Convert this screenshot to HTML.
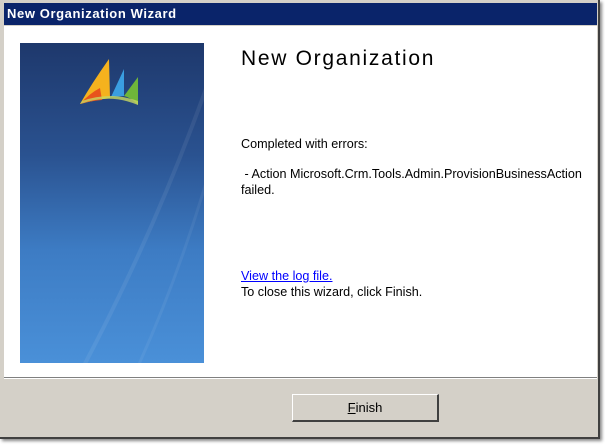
<!DOCTYPE html>
<html><head><style>
body{margin:0;width:605px;height:445px;background:#fff;position:relative;overflow:hidden;font-family:"Liberation Sans",sans-serif;}
.win{position:absolute;left:0;top:0;width:598px;height:437px;background:#d4d0c8;border-right:2px solid #404040;border-bottom:2px solid #404040;box-shadow:2px 2px 3px #888;}
.title{position:absolute;left:4px;top:3px;width:593px;height:22px;background:#0a246a;color:#fff;font-weight:bold;font-size:13px;letter-spacing:0.6px;line-height:22px;padding-left:3px;box-sizing:border-box;}
.content{position:absolute;left:4px;top:26px;width:593px;height:351px;background:#fff;border-bottom:1px solid #808080;}
.sep{position:absolute;left:4px;top:378px;width:593px;height:1px;background:#fff;}
.panel{position:absolute;left:20px;top:43px;width:184px;height:320px;background:linear-gradient(180deg,#1e386c 0%,#2a5290 35%,#3d7cc4 65%,#4a90d8 100%);overflow:hidden;}
.t{position:absolute;font-size:12.6px;color:#000;}
.btn{position:absolute;left:292px;top:394px;width:147px;height:28px;background:#d4d0c8;border-top:1px solid #fff;border-left:1px solid #fff;border-right:2px solid #404040;border-bottom:2px solid #404040;box-sizing:border-box;font-size:13px;text-align:center;line-height:25px;}
</style></head><body>
<div class="win">
<div class="title">New Organization Wizard</div>
<div class="content"></div>
<div class="sep"></div>
<div class="panel">
<svg width="184" height="320" style="position:absolute;left:0;top:0">
<path d="M195,20 Q140,180 60,330" stroke="rgba(255,255,255,0.07)" stroke-width="4" fill="none"/>
<path d="M205,70 Q170,210 115,330" stroke="rgba(255,255,255,0.06)" stroke-width="3" fill="none"/>
<path d="M60,61 Q72,40 89,16 L90,55 Q75,57 60,61 Z" fill="#f5b21e"/>
<path d="M60,61 Q70,50 80,45 L82,57 Q70,58 60,61 Z" fill="#e8541c"/>
<path d="M91,54 L104,26 L104,53 Z" fill="#3a9ee0"/>
<path d="M104,53 L118,34 L118,62 Q112,55 104,53 Z" fill="#6fb63a"/>
<path d="M60,61 Q90,50 118,62 L118,58 Q90,48 62,58 Z" fill="#c8d860" opacity="0.8"/>
</svg>
</div>
<div class="t" style="left:241px;top:47px;font-size:21px;letter-spacing:1.7px;">New Organization</div>
<div class="t" style="left:241px;top:137px;">Completed with errors:</div>
<div class="t" style="left:241px;top:167px;">&nbsp;- Action Microsoft.Crm.Tools.Admin.ProvisionBusinessAction</div>
<div class="t" style="left:241px;top:183px;">failed.</div>
<div class="t" style="left:241px;top:269px;color:#0000ff;text-decoration:underline;">View the log file.</div>
<div class="t" style="left:241px;top:285px;">To close this wizard, click Finish.</div>
<div class="btn"><u>F</u>inish</div>
</div>
</body></html>
